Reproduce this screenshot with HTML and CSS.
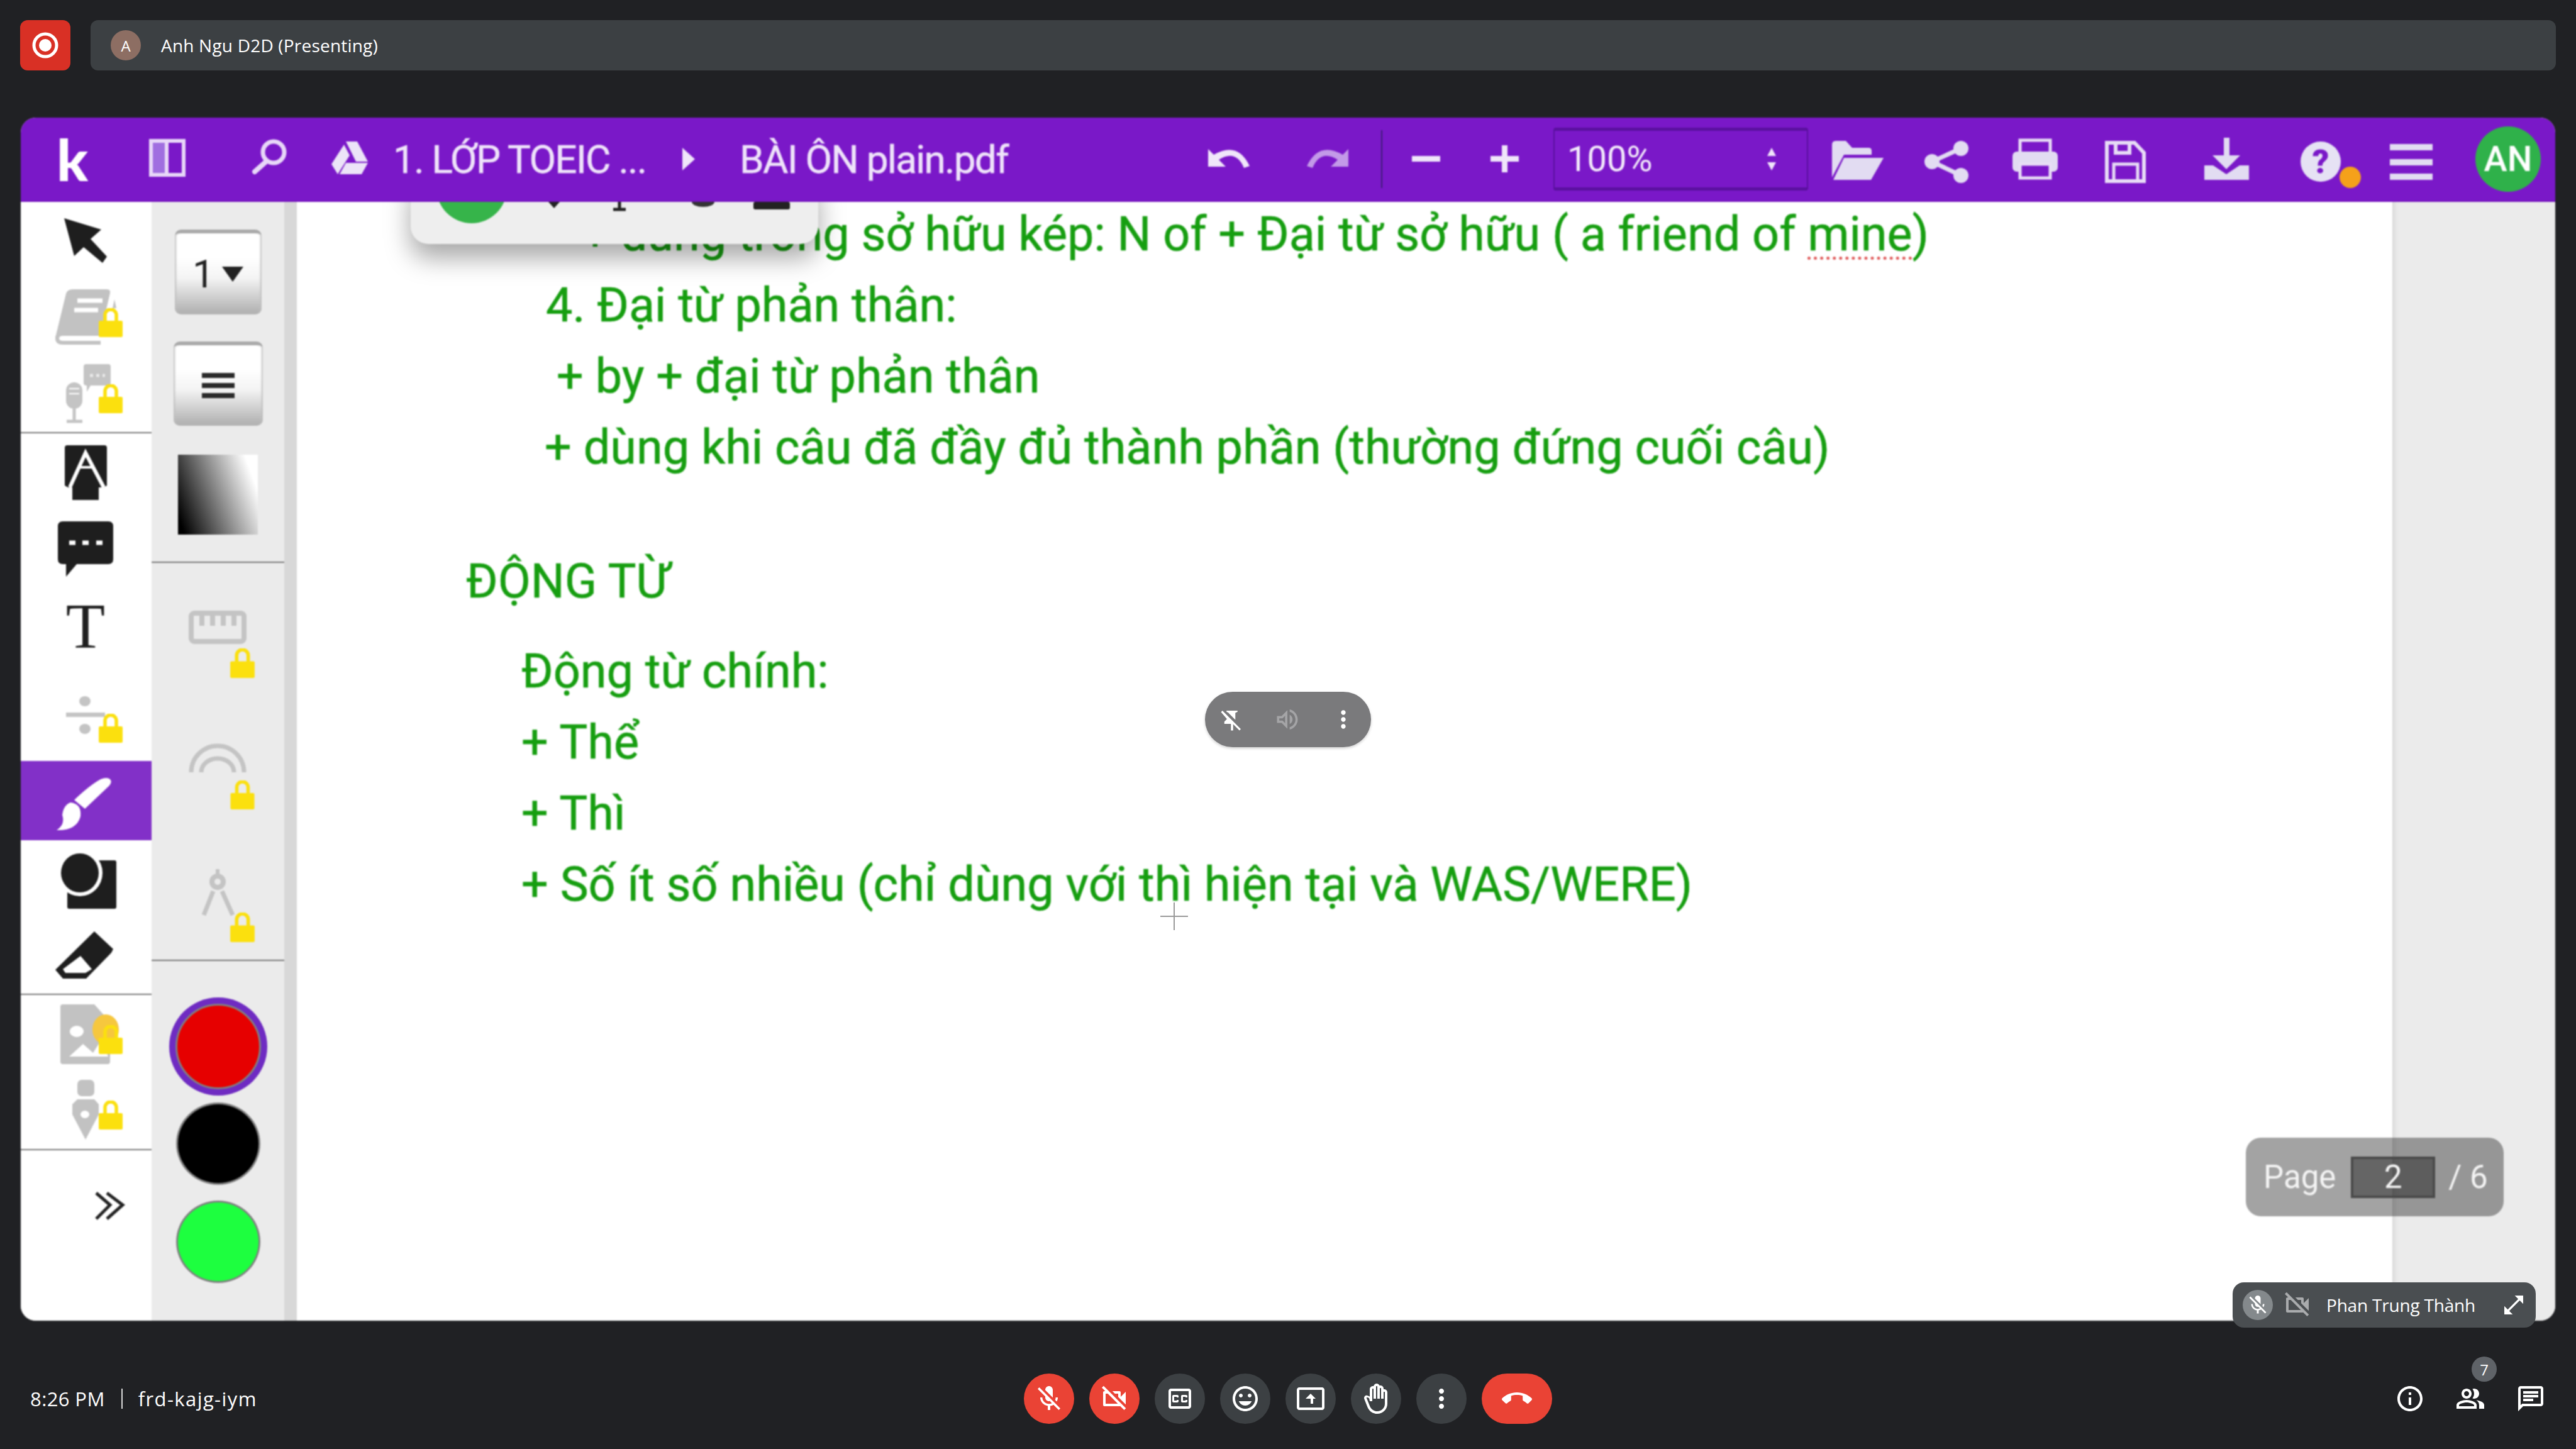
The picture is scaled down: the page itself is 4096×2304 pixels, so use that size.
FILE: index.html
```html
<!DOCTYPE html>
<html lang="vi">
<head>
<meta charset="utf-8">
<title>Meet</title>
<link rel="stylesheet" href="styles.css">
</head>
<body>
<svg class="defs" width="0" height="0">
  <symbol id="lock" viewBox="0 0 38 46">
    <path d="M10 24V11a9 9 0 0 1 18 0v13" fill="none" stroke="#fbe00e" stroke-width="5.5"/>
    <rect x="0" y="20" width="38" height="26" rx="2" fill="#fbe00e"/>
  </symbol>
</svg>

<header class="topbar">
  <div class="rec"><svg width="80" height="80" viewBox="32 32 80 80"><circle cx="72" cy="72" r="18" fill="none" stroke="#fff" stroke-width="5"/><circle cx="72" cy="72" r="10" fill="#fff"/></svg></div>
  <div class="presenter">
    <span class="presenter-avatar">A</span>
    <span class="presenter-name">Anh Ngu D2D (Presenting)</span>
  </div>
</header>

<main class="app">
  <nav class="toolbar">
    <span class="logo">k</span>
    <svg class="i-panel" width="58" height="134" viewBox="237 187 58 134"><rect x="262" y="225" width="6" height="54" fill="#e8d8f8"/><rect x="240" y="225" width="22" height="54" fill="#a06ee0"/><rect x="240" y="225" width="52" height="54" fill="none" stroke="#e8d8f8" stroke-width="6"/></svg>
    <svg class="i-search" width="56" height="134" viewBox="400 187 56 134"><circle cx="435" cy="243" r="17" fill="none" stroke="#e8d8f8" stroke-width="7"/><path d="M423 258L405 274" stroke="#e8d8f8" stroke-width="8" stroke-linecap="round"/></svg>
    <svg class="i-drive" width="58" height="134" viewBox="527 187 58 134"><path d="M550 226h18l17 32h-19zM547 231l9 17-19 30-10-16zM540 278l10-18h35l-10 18z" fill="#ece4f8"/></svg>
    <span class="crumb crumb-folder">1. LỚP TOEIC ...</span>
    <svg class="i-caret" width="20" height="134" viewBox="1085 187 20 134"><path d="M1085 236l20 18-20 18z" fill="#f0e6fa"/></svg>
    <span class="crumb crumb-file">BÀI ÔN plain.pdf</span>
    <svg class="i-undo" width="66" height="134" viewBox="1921 187 66 134"><path d="M1921 238v28h28l-11-11q27-17 40 13l9-3q-19-40-57-18z" fill="#f0e6fa"/></svg>
    <svg class="i-redo" width="66" height="134" viewBox="2078 187 66 134"><path d="M2144 238v28h-28l11-11q-27-17-40 13l-9-3q19-40 57-18z" fill="#c39ae8"/></svg>
    <span class="tb-sep"></span>
    <svg class="i-minus" width="45" height="134" viewBox="2245 187 45 134"><rect x="2245" y="249" width="45" height="9" fill="#f0e6fa"/></svg>
    <svg class="i-plus" width="45" height="134" viewBox="2370 187 45 134"><path d="M2370 249h18v-17h9v17h18v9h-18v17h-9v-17h-18z" fill="#f0e6fa"/></svg>
    <div class="zoom-select">
      <span class="zoom-value">100%</span>
      <svg width="16" height="40" viewBox="0 0 16 40"><path d="M8 2l7 13H1zM1 25h14l-7 13z" fill="#f0e6fa"/></svg>
    </div>
    <svg class="i-folder" width="82" height="134" viewBox="2913 187 82 134"><path d="M2913 283v-52q0-6 6-6h16l10 11h26q5 0 5 5v6h-44z" fill="#e2dcf2"/><path d="M2932 252h63l-20 35h-60z" fill="#e2dcf2"/></svg>
    <svg class="i-share" width="70" height="134" viewBox="3060 187 70 134"><path d="M3118 237L3072 258L3118 280" fill="none" stroke="#e2dcf2" stroke-width="7"/><circle cx="3118" cy="237" r="12" fill="#e2dcf2"/><circle cx="3072" cy="258" r="12" fill="#e2dcf2"/><circle cx="3118" cy="280" r="12" fill="#e2dcf2"/></svg>
    <svg class="i-print" width="72" height="134" viewBox="3200 187 72 134"><rect x="3212" y="224" width="48" height="26" fill="none" stroke="#e8ddf6" stroke-width="5"/><rect x="3200" y="242" width="72" height="32" rx="7" fill="#e2dcf2"/><rect x="3212" y="262" width="48" height="22" fill="#7a18c8" stroke="#e8ddf6" stroke-width="5"/></svg>
    <svg class="i-save" width="65" height="134" viewBox="3347 187 65 134"><path d="M3350 228h44l15 16v45h-59z" fill="none" stroke="#e8ddf6" stroke-width="6"/><path d="M3364 228v16h22v-16" fill="none" stroke="#e8ddf6" stroke-width="6"/><rect x="3361" y="262" width="38" height="27" fill="none" stroke="#e8ddf6" stroke-width="5"/></svg>
    <svg class="i-down" width="71" height="134" viewBox="3505 187 71 134"><path d="M3536 220h9v28h17l-22 22-22-22h18z" fill="#e2dcf2"/><path d="M3505 264h14l21 14 21-14h15v23h-71z" fill="#e2dcf2"/></svg>
    <svg class="i-help" width="96" height="134" viewBox="3658 187 96 134"><circle cx="3690" cy="258" r="32" fill="#e6e2f4"/><text x="3690" y="276" class="help-mark">?</text><circle cx="3737" cy="283" r="17" fill="#f5a11a"/></svg>
    <svg class="i-menu" width="68" height="134" viewBox="3800 187 68 134"><path d="M3800 230h68v10h-68zM3800 254h68v10h-68zM3800 277h68v10h-68z" fill="#e2dcf2"/></svg>
    <span class="user">AN</span>
  </nav>

  <div class="workspace">
    <aside class="tools">
      <div class="tool t-arrow"><svg width="208" height="122" viewBox="33 321 208 122"><path d="M102 347l59 18-17 15 26 28-7 10-30-25-15 14z" fill="#1e1e1e"/></svg></div>
      <div class="tool t-note"><svg width="208" height="124" viewBox="33 443 208 124"><path d="M182 476l3 14h-6z" fill="#c2c2c2"/><path d="M116 460h54q6 0 5 6l-15 64H104q-9 0-16 7l17-70q2-7 11-7z" fill="#c2c2c2"/><path d="M123 478h40M118 493h38" stroke="#fff" stroke-width="7"/><path d="M160 545H100q-9 0-9-7 0-7 9-7h60" fill="none" stroke="#c2c2c2" stroke-width="6"/><use href="#lock" x="157" y="490" width="38" height="46"/></svg></div>
      <div class="tool t-mic"><svg width="208" height="120" viewBox="33 567 208 120"><rect x="105" y="608" width="26" height="42" rx="13" fill="#c4c4c4"/><path d="M110 618h16M110 626h16" stroke="#fff" stroke-width="2"/><path d="M118 650v18M106 670h25" stroke="#c4c4c4" stroke-width="5"/><path d="M137 579h35q4 0 4 4v26q0 4-4 4h-28l-6 10v-10q-5 0-5-4v-26q0-4 4-4z" fill="#c4c4c4"/><path d="M143 597h24" stroke="#e8e8e8" stroke-width="5" stroke-dasharray="5 5"/><use href="#lock" x="157" y="611" width="38" height="46"/></svg></div>
      <hr class="rule">
      <div class="tool t-textbox"><svg width="208" height="124" viewBox="33 689 208 124"><path d="M107 708h59q4 0 4 4v60l-5 3H108l-5-3v-60q0-4 4-4z" fill="#1e1e1e"/><path d="M111 775l25-55 29 55" fill="none" stroke="#fff" stroke-width="6"/><path d="M126 743h20" stroke="#fff" stroke-width="4"/><path d="M136 750l21 24v21h-42v-21z" fill="#1e1e1e"/></svg></div>
      <div class="tool t-comment"><svg width="208" height="120" viewBox="33 813 208 120"><path d="M100 829h72q8 0 8 8v52q0 8-8 8h-50l-17 20v-20h-5q-8 0-8-8v-52q0-8 8-8z" fill="#1e1e1e"/><path d="M110 863h10M131 863h10M153 863h10" stroke="#fff" stroke-width="7"/></svg></div>
      <div class="tool t-text"><span class="serif-t">T</span></div>
      <div class="tool t-divide"><svg width="208" height="151" viewBox="33 1059 208 151"><ellipse cx="135" cy="1115" rx="9" ry="8" fill="#c4c4c4"/><rect x="105" y="1133" width="62" height="7" fill="#c4c4c4"/><ellipse cx="135" cy="1159" rx="9" ry="8" fill="#c4c4c4"/><use href="#lock" x="157" y="1135" width="38" height="46"/></svg></div>
      <div class="tool t-brush active"><svg width="208" height="126" viewBox="33 1210 208 126"><path d="M160 1239q10-4 15 0 4 5-2 11l-38 36-17-14q24-23 42-33z" fill="#fff"/><path d="M112 1276q18 2 16 22-6 23-38 22 14-9 9-24 2-16 13-20z" fill="#fff"/></svg></div>
      <div class="tool t-shape"><svg width="208" height="130" viewBox="33 1336 208 130"><rect x="107" y="1368" width="78" height="77" rx="3" fill="#1e1e1e"/><ellipse cx="127" cy="1388" rx="36" ry="37" fill="#fff"/><ellipse cx="127" cy="1388" rx="30" ry="31" fill="#1e1e1e"/></svg></div>
      <div class="tool t-eraser"><svg width="208" height="114" viewBox="33 1466 208 114"><path d="M150 1481l30 28-3 6-40 41H100l-12-14z" fill="#1e1e1e"/><path d="M100 1541l28-21 18 21-10 6h-32z" fill="#fff"/></svg></div>
      <hr class="rule">
      <div class="tool t-image"><svg width="208" height="126" viewBox="33 1582 208 126"><path d="M100 1597h50l25 28v63q0 4-4 4h-71q-4 0-4-4v-87q0-4 4-4z" fill="#c2c2c2"/><ellipse cx="122" cy="1640" rx="11" ry="9" fill="#fff"/><path d="M110 1680l22-20 16 14 14-22 10 28z" fill="#fff"/><ellipse cx="168" cy="1637" rx="21" ry="24" fill="#f6c73e"/><use href="#lock" x="157" y="1630" width="38" height="46"/></svg></div>
      <div class="tool t-pen"><svg width="208" height="119" viewBox="33 1708 208 119"><rect x="123" y="1717" width="27" height="26" rx="7" fill="#c2c2c2"/><path d="M123 1748h27l7 8v16l-21 40-21-40v-16z" fill="#c2c2c2"/><ellipse cx="135" cy="1772" rx="7" ry="6" fill="#fff"/><use href="#lock" x="157" y="1750" width="38" height="46"/></svg></div>
      <hr class="rule">
      <div class="tool t-more"><svg width="208" height="130" viewBox="33 1829 208 130"><path d="M153 1897l22 19-22 22M170 1897l25 19-25 22" fill="none" stroke="#222" stroke-width="5"/></svg></div>
    </aside>

    <aside class="options">
      <div class="bevel bevel-size"><span class="size-num">1</span><svg width="34" height="24" viewBox="0 0 34 24"><path d="M0 0h34L17 24z" fill="#222"/></svg></div>
      <div class="bevel bevel-menu"><svg width="52" height="44" viewBox="0 0 52 44"><path d="M0 2h52v8H0zM0 18h52v8H0zM0 34h52v8H0z" fill="#2a2a2a"/></svg></div>
      <div class="gradient"></div>
      <hr class="rule rule-gap">
      <div class="opt o-ruler"><svg width="211" height="211" viewBox="241 894 211 211"><rect x="304" y="974" width="84" height="45" rx="5" fill="none" stroke="#c4c4c4" stroke-width="8"/><path d="M321 978v16M338 978v16M355 978v16M372 978v16" stroke="#c4c4c4" stroke-width="8"/><use href="#lock" x="366" y="1030" width="39" height="47"/></svg></div>
      <div class="opt o-arc"><svg width="211" height="215" viewBox="241 1105 211 215"><path d="M304 1227a42 42 0 0 1 84 0" fill="none" stroke="#c4c4c4" stroke-width="7"/><path d="M320 1227a26 22 0 0 1 52 0" fill="none" stroke="#c4c4c4" stroke-width="7"/><use href="#lock" x="366" y="1240" width="39" height="46"/></svg></div>
      <div class="opt o-compass"><svg width="211" height="205" viewBox="241 1320 211 205"><rect x="343" y="1381" width="6" height="10" fill="#c4c4c4"/><circle cx="346" cy="1401" r="9" fill="none" stroke="#c4c4c4" stroke-width="8"/><path d="M339 1416l-15 38M353 1416l17 38" stroke="#c4c4c4" stroke-width="7"/><use href="#lock" x="366" y="1450" width="39" height="47"/></svg></div>
      <hr class="rule">
      <div class="swatch swatch-red"></div>
      <div class="swatch swatch-black"></div>
      <div class="swatch swatch-green"></div>
    </aside>

    <div class="scroll"></div>

    <section class="paper">
      <div class="doc">
        <p class="line i-a">+ dùng trong sở hữu kép: N of + Đại từ sở hữu ( a friend of <span class="spell">mine</span>)</p>
        <p class="line i-b">4. Đại từ phản thân:</p>
        <p class="line i-c">+ by + đại từ phản thân</p>
        <p class="line i-d">+ dùng khi câu đã đầy đủ thành phần (thường đứng cuối câu)</p>
        <p class="line i-h">ĐỘNG TỪ</p>
        <p class="line i-e">Động từ chính:</p>
        <p class="line i-e">+ Thể</p>
        <p class="line i-e">+ Thì</p>
        <p class="line i-e">+ Số ít số nhiều (chỉ dùng với thì hiện tại và WAS/WERE)</p>
      </div>
      <div class="popover"><svg width="648" height="107" viewBox="653 281 648 107"><circle cx="750" cy="299" r="56" fill="#36b44a"/><path d="M872 321h18l-9 10z" fill="#222"/><path d="M985 321v10M975 333h20" stroke="#222" stroke-width="5"/><path d="M1100 321a18 8 0 0 0 36 0z" fill="#333"/><rect x="1198" y="321" width="58" height="12" rx="3" fill="#222"/></svg></div>
    </section>
    <div class="gutter"></div>

    <div class="pager">
      <span>Page</span>
      <span class="pager-input">2</span>
      <span>/ 6</span>
    </div>
  </div>
</main>

<div class="pin-menu">
  <svg width="42" height="42" viewBox="0 0 24 24"><path fill="#fff" d="M2 5.27L3.28 4 20 20.72 18.73 22 13 16.27V22h-2v-6H5v-2l2.4-2.4zM17 4v1l-2 1v6l-.01.28L9 6.27V6L7 5V4z"/></svg>
  <svg width="44" height="44" viewBox="0 0 24 24"><path fill="#a4a4a6" d="M3 9v6h4l5 5V4L7 9H3zm7-.17v6.34L7.83 13H5v-2h2.83L10 8.83zM16.5 12c0-1.77-1-3.29-2.5-4.03v8.05c1.5-.73 2.5-2.25 2.5-4.02zM14 3.23v2.06c2.89.86 5 3.54 5 6.71s-2.11 5.85-5 6.71v2.06c4.01-.91 7-4.49 7-8.77 0-4.28-2.99-7.86-7-8.77z"/></svg>
  <svg width="44" height="44" viewBox="0 0 24 24"><path fill="#fff" d="M12 8c1.1 0 2-.9 2-2s-.9-2-2-2-2 .9-2 2 .9 2 2 2zm0 2c-1.1 0-2 .9-2 2s.9 2 2 2 2-.9 2-2-.9-2-2-2zm0 6c-1.1 0-2 .9-2 2s.9 2 2 2 2-.9 2-2-.9-2-2-2z"/></svg>
</div>

<svg class="cursor" width="50" height="50" viewBox="0 0 50 50"><path d="M25 3v44M3 25h44" stroke="#fff" stroke-width="6" opacity=".7"/><path d="M25 3v44M3 25h44" stroke="#9a9a9a" stroke-width="2"/></svg>

<div class="namebar">
  <span class="name-mic"><svg width="36" height="36" viewBox="0 0 24 24"><path fill="#fff" d="M19 11h-1.7c0 .74-.16 1.43-.43 2.05l1.23 1.23c.56-.98.9-2.09.9-3.28zm-4.02.17c0-.06.02-.11.02-.17V5c0-1.66-1.34-3-3-3S9 3.34 9 5v.18l5.98 5.99zM4.27 3L3 4.27l6.01 6.01V11c0 1.66 1.33 3 2.99 3 .22 0 .44-.03.65-.08l1.66 1.66c-.71.33-1.5.52-2.31.52-2.76 0-5.3-2.1-5.3-5.1H5c0 3.41 2.72 6.23 6 6.72V21h2v-3.28c.91-.13 1.77-.45 2.54-.9L19.73 21 21 19.73 4.27 3z"/></svg></span>
  <svg class="name-cam" width="48" height="48" viewBox="0 0 24 24"><path fill="#a9abad" d="M9.56 8l-2-2-4.15-4.14L2 3.27 4.73 6H4c-.55 0-1 .45-1 1v10c0 .55.45 1 1 1h12c.21 0 .39-.08.55-.18L19.73 21l1.41-1.41-8.86-8.86L9.56 8zM5 16V8h1.73l8 8H5zm10-8v2.61l6 6V6.5l-4 4V7c0-.55-.45-1-1-1h-5.61l2 2H15z"/></svg>
  <span class="name-text">Phan Trung Thành</span>
  <svg class="name-expand" width="40" height="40" viewBox="0 0 24 24"><path fill="#fff" d="M21 11V3h-8l3.29 3.29-10 10L3 13v8h8l-3.29-3.29 10-10z"/></svg>
</div>

<footer class="bottom">
  <div class="meeting"><span>8:26 PM</span><span class="meeting-sep"></span><span class="meeting-code">frd-kajg-iym</span></div>
  <div class="controls">
    <button class="ctl red"><svg width="48" height="48" viewBox="0 0 24 24"><path fill="#fff" d="M19 11h-1.7c0 .74-.16 1.43-.43 2.05l1.23 1.23c.56-.98.9-2.09.9-3.28zm-4.02.17c0-.06.02-.11.02-.17V5c0-1.66-1.34-3-3-3S9 3.34 9 5v.18l5.98 5.99zM4.27 3L3 4.27l6.01 6.01V11c0 1.66 1.33 3 2.99 3 .22 0 .44-.03.65-.08l1.66 1.66c-.71.33-1.5.52-2.31.52-2.76 0-5.3-2.1-5.3-5.1H5c0 3.41 2.72 6.23 6 6.72V21h2v-3.28c.91-.13 1.77-.45 2.54-.9L19.73 21 21 19.73 4.27 3z"/></svg></button>
    <button class="ctl red"><svg width="48" height="48" viewBox="0 0 24 24"><path fill="#fff" d="M9.56 8l-2-2-4.15-4.14L2 3.27 4.73 6H4c-.55 0-1 .45-1 1v10c0 .55.45 1 1 1h12c.21 0 .39-.08.55-.18L19.73 21l1.41-1.41-8.86-8.86L9.56 8zM5 16V8h1.73l8 8H5zm10-8v2.61l6 6V6.5l-4 4V7c0-.55-.45-1-1-1h-5.61l2 2H15z"/></svg></button>
    <button class="ctl"><svg width="48" height="48" viewBox="0 0 24 24"><path fill="#fff" d="M19 4H5c-1.11 0-2 .9-2 2v12c0 1.1.89 2 2 2h14c1.1 0 2-.9 2-2V6c0-1.1-.9-2-2-2zm0 14H5V6h14v12zM7 15h3c.55 0 1-.45 1-1v-1H9.5v.5h-2v-3h2v.5H11v-1c0-.55-.45-1-1-1H7c-.55 0-1 .45-1 1v4c0 .55.45 1 1 1zm7 0h3c.55 0 1-.45 1-1v-1h-1.5v.5h-2v-3h2v.5H18v-1c0-.55-.45-1-1-1h-3c-.55 0-1 .45-1 1v4c0 .55.45 1 1 1z"/></svg></button>
    <button class="ctl"><svg width="48" height="48" viewBox="0 0 24 24"><path fill="#fff" d="M11.99 2C6.47 2 2 6.48 2 12s4.47 10 9.99 10C17.52 22 22 17.52 22 12S17.52 2 11.99 2zM12 20c-4.42 0-8-3.58-8-8s3.58-8 8-8 8 3.58 8 8-3.58 8-8 8zm3.5-9c.83 0 1.5-.67 1.5-1.5S16.33 8 15.5 8 14 8.67 14 9.5s.67 1.5 1.5 1.5zm-7 0c.83 0 1.5-.67 1.5-1.5S9.33 8 8.5 8 7 8.67 7 9.5 7.67 11 8.5 11zm3.5 6.5c2.33 0 4.31-1.46 5.11-3.5H6.89c.8 2.04 2.78 3.5 5.11 3.5z"/></svg></button>
    <button class="ctl"><svg width="48" height="48" viewBox="0 0 24 24"><path fill="#fff" d="M21 3H3c-1.11 0-2 .89-2 2v14c0 1.11.89 2 2 2h18c1.11 0 2-.89 2-2V5c0-1.11-.89-2-2-2zm0 16.02H3V4.98h18v14.04zM10 12H8l4-4 4 4h-2v4h-2v-4z"/></svg></button>
    <button class="ctl"><svg width="48" height="48" viewBox="0 0 24 24"><path fill="#fff" d="M21 7c0-1.38-1.12-2.5-2.5-2.5-.17 0-.34.02-.5.05V4c0-1.38-1.12-2.5-2.5-2.5-.23 0-.46.03-.67.09C14.46.66 13.56 0 12.5 0c-1.23 0-2.25.89-2.46 2.06C9.87 2.02 9.69 2 9.5 2 8.12 2 7 3.12 7 4.5v5.89c-.34-.31-.76-.54-1.22-.66L5 9.5c-.83-.23-1.7.09-2.19.83-.38.57-.4 1.31-.15 1.95l2.56 6.43C6.49 21.91 9.57 24 13 24c4.42 0 8-3.58 8-8V7zm-2 9c0 3.31-2.69 6-6 6-2.61 0-4.95-1.59-5.91-4.01l-2.6-6.54c-.1-.25.13-.51.39-.44l.93.23c.36.09.66.35.79.7L7 14h2V4.5c0-.28.22-.5.5-.5s.5.22.5.5V12h2V2.5c0-.28.22-.5.5-.5s.5.22.5.5V12h2V4c0-.28.22-.5.5-.5s.5.22.5.5v8h2V7c0-.28.22-.5.5-.5s.5.22.5.5v9z"/></svg></button>
    <button class="ctl"><svg width="48" height="48" viewBox="0 0 24 24"><path fill="#fff" d="M12 8c1.1 0 2-.9 2-2s-.9-2-2-2-2 .9-2 2 .9 2 2 2zm0 2c-1.1 0-2 .9-2 2s.9 2 2 2 2-.9 2-2-.9-2-2-2zm0 6c-1.1 0-2 .9-2 2s.9 2 2 2 2-.9 2-2-.9-2-2-2z"/></svg></button>
    <button class="ctl red hang"><svg width="48" height="48" viewBox="0 0 24 24"><path fill="#fff" d="M12 9c-1.6 0-3.15.25-4.6.72v3.1c0 .39-.23.74-.56.9-.98.49-1.87 1.12-2.66 1.85-.18.18-.43.28-.7.28-.28 0-.53-.11-.71-.29L.29 13.08c-.18-.17-.29-.42-.29-.7 0-.28.11-.53.29-.71C3.34 8.78 7.46 7 12 7s8.66 1.78 11.71 4.67c.18.18.29.43.29.71 0 .28-.11.53-.29.71l-2.48 2.48c-.18.18-.43.29-.71.29-.27 0-.52-.11-.7-.28-.79-.74-1.69-1.36-2.67-1.85-.33-.16-.56-.5-.56-.9v-3.1C15.15 9.25 13.6 9 12 9z"/></svg></button>
  </div>
  <div class="side">
    <span class="side-btn"><svg width="48" height="48" viewBox="0 0 24 24"><path fill="#fff" d="M11 7h2v2h-2zm0 4h2v6h-2zm1-9C6.48 2 2 6.48 2 12s4.48 10 10 10 10-4.48 10-10S17.52 2 12 2zm0 18c-4.41 0-8-3.59-8-8s3.59-8 8-8 8 3.59 8 8-3.59 8-8 8z"/></svg></span>
    <span class="side-btn"><svg width="48" height="48" viewBox="0 0 24 24"><path fill="#fff" d="M16.67 13.13C18.04 14.06 19 15.32 19 17v3h4v-3c0-2.18-3.57-3.47-6.33-3.87zM15 12c2.21 0 4-1.79 4-4s-1.79-4-4-4c-.47 0-.91.1-1.33.24C14.5 5.27 15 6.58 15 8s-.5 2.73-1.33 3.76c.42.14.86.24 1.33.24zM9 12c2.21 0 4-1.79 4-4s-1.79-4-4-4-4 1.79-4 4 1.79 4 4 4zm0-6c1.1 0 2 .9 2 2s-.9 2-2 2-2-.9-2-2 .9-2 2-2zm0 7c-2.67 0-8 1.34-8 4v3h16v-3c0-2.66-5.33-4-8-4zm6 5H3v-.99C3.2 16.29 6.3 15 9 15s5.8 1.29 6 2v1z"/></svg><span class="badge">7</span></span>
    <span class="side-btn"><svg width="48" height="48" viewBox="0 0 24 24"><path fill="#fff" d="M20 2H4c-1.1 0-1.99.9-1.99 2L2 22l4-4h14c1.1 0 2-.9 2-2V4c0-1.1-.9-2-2-2zm0 14H5.17L4 17.17V4h16v12zM6 12h8v2H6zm0-3h12v2H6zm0-3h12v2H6z"/></svg></span>
  </div>
</footer>
</body>
</html>
```

FILE: styles.css
```css
* { box-sizing: border-box; }
html, body { margin: 0; padding: 0; }
body {
  width: 4096px;
  height: 2304px;
  background: #202124;
  display: flex;
  flex-direction: column;
  position: relative;
  overflow: hidden;
  font-family: "Open Sans", "Noto Sans", sans-serif;
  color: #fff;
}
.defs { position: absolute; }
svg { display: block; flex: none; }

/* top strip */
.topbar { height: 187px; padding: 32px 32px 0; display: flex; gap: 32px; flex: none; }
.rec { width: 80px; height: 80px; background: #d93025; border-radius: 12px; }
.presenter {
  flex: 1; height: 80px; background: #3c4043; border-radius: 12px;
  display: flex; align-items: center; padding-left: 32px; gap: 32px;
}
.presenter-avatar {
  width: 48px; height: 48px; border-radius: 50%; background: #8d6e63;
  display: flex; align-items: center; justify-content: center; font-size: 24px;
}
.presenter-name { font-size: 28px; letter-spacing: .2px; }

/* application window */
.app {
  margin-left: 33px; width: 4030px; height: 1913px; flex: none;
  border-radius: 24px; overflow: hidden; background: #fff;
  display: flex; flex-direction: column;
  filter: blur(.8px);
}
.toolbar {
  height: 134px; flex: none; background: #7a18c8; display: flex; align-items: center;
  padding-left: 57px; position: relative; z-index: 3;
  border-bottom: 2px solid #7414bd;
}
.logo { width: 48px; font: 900 92px/134px Lato, sans-serif; color: #fff; }
.crumb { font-family: Roboto, sans-serif; font-size: 62px; color: #efe4fa; white-space: nowrap; flex: none; letter-spacing: -1.7px; -webkit-text-stroke: .5px #efe4fa; }
.i-panel { margin-left: 99px; }
.i-search { margin-left: 105px; }
.i-drive { margin-left: 71px; }
.crumb-folder { margin-left: 40px; width: 397px; }
.i-caret { margin-left: 63px; }
.crumb-file { margin-left: 71px; width: 430px; }
.i-undo { margin-left: 315px; }
.i-redo { margin-left: 91px; }
.tb-sep { margin-left: 52px; width: 2px; height: 92px; background: #3d1c78; flex: none; }
.i-minus { margin-left: 47px; }
.i-plus { margin-left: 80px; }
.zoom-select {
  margin-left: 55px; width: 405px; height: 100px; flex: none;
  border: 2px solid #5a109f; border-top-width: 5px; border-bottom-width: 5px; border-radius: 4px;
  display: flex; align-items: center; justify-content: space-between; padding: 0 48px 0 20px;
}
.zoom-value { font: 400 56px Roboto, sans-serif; color: #f3ebfb; }
.i-folder { margin-left: 38px; }
.i-share { margin-left: 65px; }
.i-print { margin-left: 70px; }
.i-save { margin-left: 75px; }
.i-down { margin-left: 93px; }
.i-help { margin-left: 82px; }
.help-mark { font: 900 52px Roboto, sans-serif; fill: #7a18c8; text-anchor: middle; }
.i-menu { margin-left: 46px; }
.user {
  margin-left: 68px; width: 104px; height: 104px; border-radius: 50%; background: #2fb14a; flex: none;
  display: flex; align-items: center; justify-content: center;
  font: 500 56px Roboto, sans-serif; color: #fff;
}

.workspace { flex: 1; display: flex; position: relative; min-height: 0; }

/* tool columns */
.tools { width: 208px; flex: none; background: #fff; display: flex; flex-direction: column; }
.tool { flex: none; display: flex; justify-content: center; align-items: center; }
.t-arrow { height: 122px; }
.t-note { height: 124px; }
.t-mic { height: 120px; }
.t-textbox { height: 124px; }
.t-comment { height: 120px; }
.t-text { height: 126px; }
.t-divide { height: 151px; }
.t-brush { height: 126px; }
.t-brush.active { background: #8230c8; }
.t-shape { height: 130px; }
.t-eraser { height: 114px; }
.t-image { height: 126px; }
.t-pen { height: 119px; }
.t-more { height: 130px; }
.serif-t { font: 400 102px/126px "Liberation Serif", serif; color: #1e1e1e; margin-right: 2px; }
.rule { margin: 0; border: 0; height: 2px; background: #777; flex: none; width: 100%; }

.options {
  width: 211px; flex: none; background: #ebebeb; display: flex; flex-direction: column; align-items: center;
  padding-top: 44px;
}
.bevel {
  background: linear-gradient(#fff 30%, #f4f4f4 55%, #b4b4b4 96%);
  border-top: 6px solid #aaa; border-radius: 10px; flex: none;
  display: flex; align-items: center; justify-content: center;
  box-shadow: inset 4px 0 3px -2px #c0c0c0, inset -4px 0 3px -2px #c0c0c0;
}
.bevel-size { width: 138px; height: 135px; gap: 12px; }
.bevel-menu { width: 142px; height: 134px; margin-top: 43px; }
.size-num { font: 400 62px Roboto, sans-serif; color: #222; }
.gradient { width: 127px; height: 127px; margin-top: 46px; margin-bottom: 43px; background: linear-gradient(70deg, #000 6%, #fff 88%); flex: none; }
.opt { flex: none; width: 100%; }
.o-ruler { height: 211px; }
.o-arc { height: 215px; }
.o-compass { height: 205px; }
.swatch { flex: none; border-radius: 50%; width: 134px; height: 131px; border: 3px solid #808080; }
.swatch-red { width: 136px; height: 136px; margin-top: 68px; background: #e60000; box-shadow: 0 0 0 10px #6f2bc2; }
.swatch-black { margin-top: 21px; background: #000; }
.swatch-green { margin-top: 25px; background: #1dff3f; }

.scroll { width: 20px; flex: none; background: #d8d8d8; }
.gutter { width: 259px; flex: none; background: #ebebeb; box-shadow: inset 8px 0 8px -6px #d0d0d0; }

/* document */
.paper { flex: 1; position: relative; overflow: hidden; background: #fff; }
.doc { margin-top: -5px; }
.line {
  margin: 0; height: 113px; font: 400 75.6px/113px Roboto, sans-serif; color: #169e10; white-space: nowrap;
  -webkit-text-stroke: .6px #169e10;
}
.i-a { margin-left: 453px; }
.i-b { margin-left: 396px; }
.i-c { margin-left: 413px; }
.i-d { margin-left: 394px; }
.i-e { margin-left: 357px; }
.i-h { margin-left: 269px; margin-top: 100px; margin-bottom: 30px; }
.spell { text-decoration: underline dotted #e05a5a 5px; text-underline-offset: 10px; }
.popover {
  position: absolute; left: 181px; top: -40px; width: 648px; height: 107px;
  background: #eeeeee; border-radius: 0 0 28px 28px;
  box-shadow: 0 22px 40px rgba(0,0,0,.35);
}

/* page widget */
.pager {
  position: absolute; left: 3538px; top: 1488px; width: 410px; height: 125px;
  background: rgba(0,0,0,.36); border-radius: 24px;
  display: flex; align-items: center; padding-left: 28px;
  font: 400 51px Roboto, sans-serif; color: #f4f4f4;
}
.pager-input {
  width: 134px; height: 66px; margin: 0 21px 0 24px; background: rgba(0,0,0,.38);
  border: 4px solid #4a4a4a; display: flex; align-items: center; justify-content: center;
}

/* overlays from the meeting client */
.pin-menu {
  position: absolute; left: 1916px; top: 1100px; width: 264px; height: 88px;
  background: #7a7a7c; border-radius: 44px;
  box-shadow: 0 2px 4px rgba(0,0,0,.2);
  display: flex; align-items: center; padding-left: 22px; gap: 45px;
}
.cursor { position: absolute; left: 1842px; top: 1432px; }
.namebar {
  position: absolute; left: 3550px; top: 2039px; width: 482px; height: 72px;
  background: #4a4e51; border-radius: 18px;
  display: flex; align-items: center; padding-left: 16px;
}
.name-mic {
  width: 48px; height: 48px; border-radius: 50%; background: #84898c;
  display: flex; align-items: center; justify-content: center; flex: none;
}
.name-cam { margin-left: 15px; }
.name-text { margin-left: 22px; font-size: 28px; white-space: nowrap; width: 254px; letter-spacing: -.2px; }
.name-expand { margin-left: 24px; }

/* bottom strip */
.bottom {
  flex: 1; min-height: 0; display: grid; grid-template-columns: 1fr auto 1fr; padding-top: 84px;
}
.meeting { display: flex; align-items: center; height: 80px; padding-left: 48px; font-size: 31px; letter-spacing: .4px; }
.meeting-sep { width: 2px; height: 32px; background: #d8d8d8; margin: 0 25px 0 26px; }
.meeting-code { letter-spacing: 1.4px; }
.controls { display: flex; gap: 24px; }
.ctl {
  width: 80px; height: 80px; border: 0; padding: 0; border-radius: 50%; background: #3c4043;
  display: flex; align-items: center; justify-content: center;
}
.ctl.red { background: #ea4335; }
.ctl.hang { width: 112px; border-radius: 40px; }
.side { display: flex; justify-content: flex-end; padding-right: 24px; }
.side-btn { width: 96px; height: 80px; display: flex; align-items: center; justify-content: center; position: relative; }
.badge {
  position: absolute; left: 50px; top: -27px; width: 40px; height: 40px; border-radius: 50%;
  background: #5f6368; display: flex; align-items: center; justify-content: center; font-size: 24px;
}
```
